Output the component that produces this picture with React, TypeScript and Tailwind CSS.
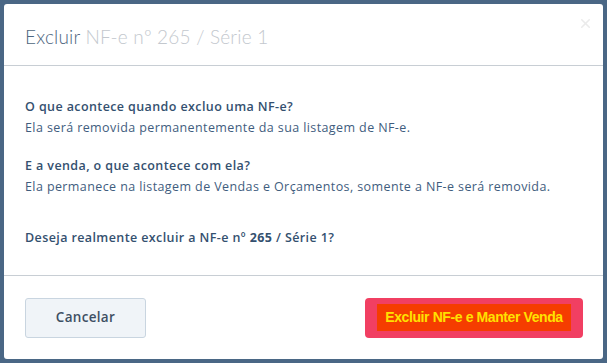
import { X } from "lucide-react";

const font = { fontFamily: "'Open Sans', Lato, sans-serif" };

export default function App() {
  return (
    <div className="w-[607px] h-[363px] bg-[#4a6785] p-[4px]" style={font}>
      <div className="w-[599px] h-[355px] bg-white rounded-[3px] flex flex-col">
        {/* Header */}
        <div className="relative h-[62px] border-b border-[#c8ced4] flex items-end pb-[19px] pl-[21px]">
          <h2
            className="text-[19px] leading-none font-light text-[#4e6680] tracking-[0.2px]"
            style={{ fontFamily: "Lato, sans-serif" }}
          >
            Excluir <span className="text-[#c3c8ce]">NF-e nº 265 / Série 1</span>
          </h2>
          <X
            size={15}
            strokeWidth={2.5}
            className="absolute right-[10px] top-[12px] text-[#ebebeb]"
          />
        </div>

        {/* Body */}
        <div className="h-[210px] border-b border-[#c8ced4] pl-[21px] pt-[30px] text-[12.5px] leading-[21px] tracking-[0.4px] text-[#3f5d7e]">
          <p className="font-semibold text-[#34506f]">O que acontece quando excluo uma NF-e?</p>
          <p>Ela será removida permanentemente da sua listagem de NF-e.</p>
          <p className="font-semibold text-[#34506f] mt-[17px]">E a venda, o que acontece com ela?</p>
          <p>Ela permanece na listagem de Vendas e Orçamentos, somente a NF-e será removida.</p>
          <p className="font-semibold text-[#34506f] mt-[30px]">
            Deseja realmente excluir a NF-e nº <span className="font-bold">265</span> / Série 1?
          </p>
        </div>

        {/* Footer */}
        <div className="flex-1 flex items-center justify-between pl-[21px] pr-[20px]">
          <button className="w-[121px] h-[40px] bg-[#f0f4f8] border border-[#c9d5e0] rounded-[3px] text-[13.5px] font-semibold text-[#3d4f63] tracking-[0.3px]">
            Cancelar
          </button>
          <button className="w-[218px] h-[40px] bg-[#f13f62] rounded-[4px] flex items-center justify-center">
            <span
              className="bg-[#f53d00] text-[#ffe100] text-[14px] font-bold h-[27px] w-[194px] flex items-center justify-center tracking-[-0.4px]"
              style={{ fontFamily: "'Liberation Sans', Arial, sans-serif" }}
            >
              Excluir NF-e e Manter Venda
            </span>
          </button>
        </div>
      </div>
    </div>
  );
}
